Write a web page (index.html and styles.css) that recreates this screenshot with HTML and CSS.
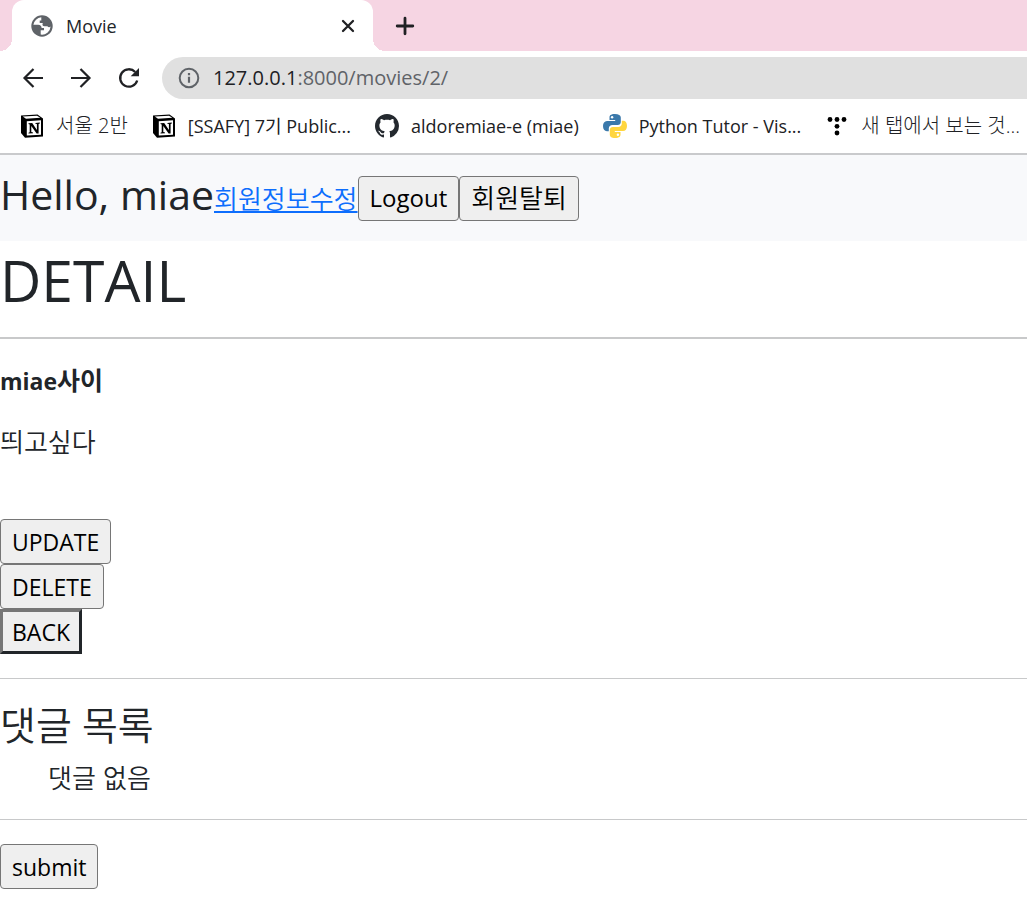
FILE: index.html
```html
<!DOCTYPE html>
<html lang="ko">
<head>
<meta charset="utf-8">
<title>Movie</title>
<link rel="stylesheet" href="styles.css">
</head>
<body>
<header class="browser">
  <div class="tabstrip">
    <div class="tab">
      <svg class="tab-icon" width="22" height="22" viewBox="0 0 22 22" aria-hidden="true"><circle cx="11" cy="11" r="10.7" fill="#5f6368"/><path d="M10.300 2.300A8.700 8.700 0 0 0 2.400 9.800H7.200C9.400 9.800 10.600 11.200 10.600 13H13V15.200H9.700V19.600A8.700 8.700 0 0 0 19.600 11.500C18.600 12.500 17.200 12.300 16.400 11.300H13.500C11.500 11.300 10.900 9.400 11.900 8H8.700V5.600H10.300Z" fill="#fff"/></svg>
      <span class="tab-title">Movie</span>
      <button class="icon-button" aria-label="Close tab"><svg width="14" height="14" viewBox="0 0 14 14"><path d="M2 2l10 10M12 2L2 12" stroke="#202124" stroke-width="2.300" stroke-linecap="round"/></svg></button>
    </div>
    <button class="icon-button new-tab" aria-label="New tab"><svg width="20" height="20" viewBox="0 0 20 20"><path d="M10 2.200v15.600M2.200 10h15.600" stroke="#202124" stroke-width="2.800" stroke-linecap="round"/></svg></button>
  </div>
  <div class="toolbar">
    <button class="icon-button" aria-label="Back"><svg width="24" height="24" viewBox="0 0 24 24" fill="none" stroke="#202124" stroke-width="2.200"><path d="M22 12H3.500M12.500 3L3.500 12l9 9"/></svg></button>
    <button class="icon-button" aria-label="Forward"><svg width="24" height="24" viewBox="0 0 24 24" fill="none" stroke="#202124" stroke-width="2.200"><path d="M2 12h18.500M11.500 3l9 9-9 9"/></svg></button>
    <button class="icon-button" aria-label="Reload"><svg width="24" height="24" viewBox="0 0 24 24"><path d="M20.200 14.500A8.700 8.700 0 1 1 18.200 6" fill="none" stroke="#202124" stroke-width="2.300"/><path d="M22 2v8.300h-8.300z" fill="#202124"/></svg></button>
    <div class="address">
      <svg width="22" height="22" viewBox="0 0 22 22" aria-hidden="true"><circle cx="11" cy="11" r="9.300" fill="none" stroke="#5f6368" stroke-width="2"/><path d="M11 9.800v6M11 6v2.200" stroke="#5f6368" stroke-width="2.200"/></svg>
      <span>127.0.0.1<span class="address-path">:8000/movies/2/</span></span>
    </div>
  </div>
  <nav class="bookmarks" aria-label="Bookmarks">
    <a class="bookmark bookmark-korean" href="#"><svg width="24" height="24" viewBox="0 0 24 24" aria-hidden="true"><path d="M1 1.500L17.500.500 23 4.500V22.500L5 23.800 1 19z" fill="#000"/><path d="M2.800 2.600L17 1.700 20.300 3.800 6 4.800z" fill="#fff"/><path d="M6.800 7.200L21 6.200V20.700L6.800 21.600z" fill="#fff"/><path d="M8.500 9.300l3.700-.3 4.700 7V10l-1.500-.3V8.900l4.400-.3v.9l-1.200.5v9.500l-2 .1-5.300-7.500v6l1.700.4v.8l-4.500.3v-.9l1.200-.5V10.500l-1.200-.4z" fill="#000"/></svg><span>서울 2반</span></a>
    <a class="bookmark" href="#"><svg width="24" height="24" viewBox="0 0 24 24" aria-hidden="true"><path d="M1 1.500L17.500.500 23 4.500V22.500L5 23.800 1 19z" fill="#000"/><path d="M2.800 2.600L17 1.700 20.300 3.800 6 4.800z" fill="#fff"/><path d="M6.800 7.200L21 6.200V20.700L6.800 21.600z" fill="#fff"/><path d="M8.500 9.300l3.700-.3 4.700 7V10l-1.500-.3V8.900l4.400-.3v.9l-1.200.5v9.500l-2 .1-5.300-7.500v6l1.700.4v.8l-4.500.3v-.9l1.200-.5V10.500l-1.200-.4z" fill="#000"/></svg><span>[SSAFY] 7기 Public...</span></a>
    <a class="bookmark" href="#"><svg width="24" height="24" viewBox="0 0 16 16" aria-hidden="true"><path fill="#24292f" d="M8 0C3.580 0 0 3.580 0 8c0 3.540 2.290 6.530 5.470 7.590.4.070.550-.170.550-.380 0-.190-.010-.820-.010-1.490-2.010.370-2.530-.490-2.690-.940-.090-.230-.480-.940-.820-1.130-.280-.150-.680-.520-.010-.530.630-.010 1.080.580 1.230.820.720 1.210 1.870.870 2.330.660.070-.520.280-.870.510-1.070-1.780-.2-3.640-.890-3.640-3.950 0-.870.310-1.590.820-2.150-.080-.2-.360-1.020.080-2.120 0 0 .670-.210 2.200.820.640-.180 1.320-.270 2-.270s1.360.090 2 .270c1.530-1.040 2.200-.820 2.200-.820.440 1.100.160 1.920.080 2.120.510.560.820 1.270.820 2.150 0 3.070-1.870 3.750-3.650 3.950.290.250.540.730.540 1.480 0 1.070-.010 1.930-.010 2.200 0 .210.150.460.550.380A8.010 8.010 0 0 0 16 8c0-4.420-3.580-8-8-8z"/></svg><span>aldoremiae-e (miae)</span></a>
    <a class="bookmark" href="#"><svg width="24" height="24" viewBox="0 0 24 24" aria-hidden="true"><path fill="#3b79ab" d="M11.900 0C7.500 0 6.500 1.700 6.500 3.500V6h5.700v.9H4C1.500 6.900 0 9 0 12.100 0 15.400 1.500 17.300 3.800 17.300H5.800v-2.700c0-2 1.500-3.500 3.600-3.500h5.300c1.800 0 3.100-1.300 3.100-3V3.500C17.800 1.500 15.700 0 11.900 0z"/><circle cx="9.100" cy="3.200" r="1.200" fill="#fff"/><path fill="#ffd63f" d="M12.100 24c4.400 0 5.400-1.700 5.400-3.500V18h-5.700v-.9H20c2.500 0 4-2.100 4-5.200 0-3.300-1.500-5.200-3.800-5.200h-1.400v2.700c0 2-1.500 3.500-3.600 3.500H9.900c-1.800 0-3.100 1.300-3.100 3v4.600c0 2 1.500 3.500 5.300 3.500z"/><circle cx="14.900" cy="20.800" r="1.200" fill="#fff"/></svg><span>Python Tutor - Vis...</span></a>
    <a class="bookmark bookmark-korean" href="#"><svg width="24" height="24" viewBox="0 0 24 24" aria-hidden="true"><circle cx="5" cy="5.500" r="2.400"/><circle cx="12" cy="5.500" r="2.400"/><circle cx="19" cy="5.500" r="2.400"/><circle cx="12" cy="12.300" r="2.400"/><circle cx="12" cy="19" r="2.400"/></svg><span>새 탭에서 보는 것...</span></a>
  </nav>
</header>
<nav class="navbar">
  <h3 class="greeting">Hello, miae</h3>
  <a class="profile-link hangul" href="#">회원정보수정</a>
  <button class="button">Logout</button>
  <button class="button hangul">회원탈퇴</button>
</nav>
<main>
  <h1 class="heading">DETAIL</h1>
  <hr class="rule rule-thick">
  <p class="movie-title">miae<span class="hangul">사이</span></p>
  <p class="movie-text hangul">띄고싶다</p>
  <div class="actions">
    <button class="button">UPDATE</button>
    <button class="button">DELETE</button>
    <button class="button button-raised">BACK</button>
  </div>
  <hr class="rule">
  <h4 class="comments-title">댓글 목록</h4>
  <p class="comments-empty hangul">댓글 없음</p>
  <hr class="rule">
  <button class="button">submit</button>
</main>
</body>
</html>
```
FILE: styles.css
```css
* { box-sizing: border-box; }
body {
  margin: 0;
  background: #fff;
  color: #212529;
  font-family: "Open Sans", "Noto Sans CJK KR", sans-serif;
  font-size: 23px;
  line-height: 36px;
}
h1, h3, h4, p { margin: 0; font-weight: 400; }
.hangul { font-family: "Noto Sans CJK KR", sans-serif; font-size: 26px; font-weight: 350; }

.browser { font-size: 18px; line-height: 24px; border-bottom: 2px solid #c9cacc; }
.tabstrip { display: flex; background: #f6d5e3; padding-left: 12px; height: 51px; }
.tab {
  position: relative;
  display: flex;
  align-items: center;
  gap: 13px;
  width: 361px;
  padding: 0 18px 0 19px;
  background: #fff;
  border-radius: 12px 12px 0 0;
}
.tab::before, .tab::after {
  content: "";
  position: absolute;
  bottom: 0;
  width: 12px;
  height: 12px;
}
.tab::before { right: 100%; background: radial-gradient(circle at 0 0, transparent 12px, #fff 12px); }
.tab::after { left: 100%; background: radial-gradient(circle at 100% 0, transparent 12px, #fff 12px); }
.tab-title { flex: 1; }
.icon-button { display: flex; padding: 0; border: 0; background: none; }
.new-tab { align-self: center; margin-left: 22px; }
.toolbar { display: flex; align-items: center; gap: 24px; padding: 6px 0 6px 21px; }
.address {
  display: flex;
  align-items: center;
  flex: 1;
  gap: 13px;
  height: 42px;
  margin-left: -3px;
  padding-left: 16px;
  border-radius: 21px 0 0 21px;
  background: #e0e0e0;
  color: #202124;
  font-size: 20px;
}
.address-path { color: #5f6368; }
.bookmarks { display: flex; align-items: center; gap: 24px; height: 48px; padding: 0 0 6px 20px; white-space: nowrap; overflow: hidden; }
.bookmark { display: flex; align-items: center; gap: 12px; color: #202124; text-decoration: none; }
.bookmark-korean { font-size: 20px; font-weight: 300; }

.navbar { display: flex; align-items: center; padding: 12px 0; background: #f8f9fb; }
.greeting { margin-bottom: 8px; font-size: 41px; line-height: 54px; }
.profile-link { color: #0d6efd; }
.button {
  height: 45px;
  padding: 0 11px;
  border: 1px solid #767676;
  border-radius: 4px;
  background: #efefef;
  color: #000;
  font-family: inherit;
  font-size: 23px;
  line-height: 36px;
}
.navbar .button { font-size: 24px; }
.navbar .hangul { font-size: 26px; }
.button-raised { padding: 0 9px; border: 3px solid; border-color: #767676 #212529 #212529 #767676; border-radius: 0; }
.heading { padding-top: 6px; font-size: 57px; line-height: 66px; }
.rule { margin: 24px 0; border: 0; height: 1px; background: #c8c9ca; }
.rule-thick { height: 2px; }
.movie-title { margin-bottom: 24px; font-weight: 700; }
.movie-title .hangul { font-size: 25px; font-weight: 700; line-height: 24px; }
.actions { display: flex; flex-direction: column; align-items: flex-start; margin-top: 60px; }
.comments-title { margin-bottom: 12px; font-size: 39px; line-height: 44px; font-weight: 350; }
.comments-empty { padding-left: 48px; }
```
